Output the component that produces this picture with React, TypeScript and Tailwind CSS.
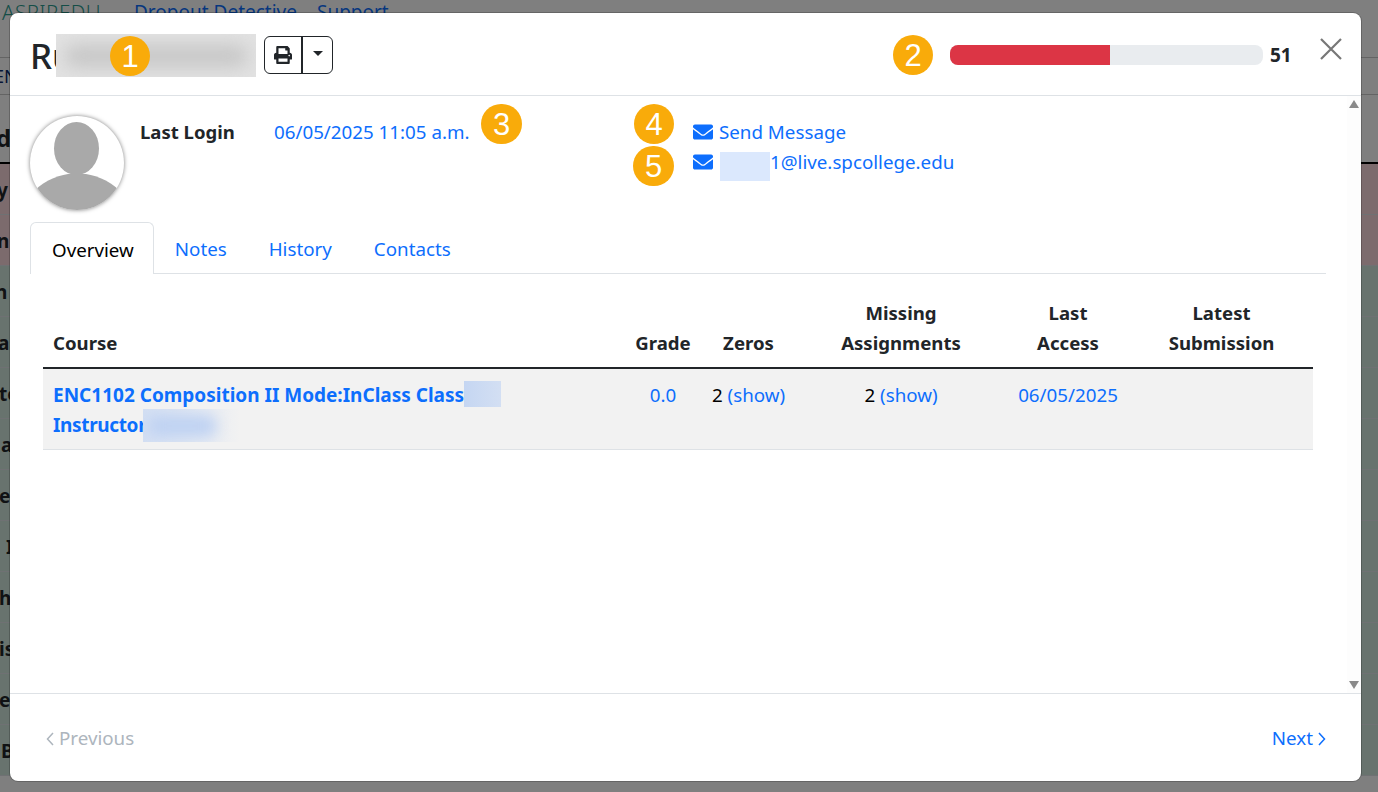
import React from "react";
import { FaPrint, FaEnvelope } from "react-icons/fa";

function Badge({ n, className }: { n: string; className: string }) {
  return (
    <div className={"absolute z-20 flex items-center justify-center rounded-full bg-[#f9ab0a] text-white font-['Liberation_Sans',sans-serif] text-[31px] leading-none " + className}>
      {n}
    </div>
  );
}

function BgRow({ bg, children }: { bg: string; children: React.ReactNode }) {
  return (
    <div className={"h-[51px] shrink-0 border-b border-[#dee2e6] flex items-center pt-[3px] overflow-hidden whitespace-nowrap font-bold text-[19px] text-[#212529] " + bg}>
      {children}
    </div>
  );
}

const redRows = [
  <span className="-ml-[3px]" key="a">y</span>,
  <span className="-ml-[3px]" key="b">n</span>,
];
const greenRows = [
  <span className="-ml-[5px]" key="a">n</span>,
  <span className="-ml-[2px]" key="b">as</span>,
  <span className="-ml-[1px]" key="c">te</span>,
  <span className="ml-[1px]" key="d">a</span>,
  <span className="-ml-[1px]" key="e">es</span>,
  <span className="ml-[6px]" key="f">I</span>,
  <span className="-ml-[1px]" key="g">h</span>,
  <span className="-ml-[1px]" key="h">is</span>,
  <span className="-ml-[1px]" key="i">es</span>,
  <span className="ml-[1px]" key="j">B</span>,
];

function Chevron({ dir }: { dir: "left" | "right" }) {
  return (
    <svg viewBox="0 0 8 14" className="w-[8px] h-[14px]" fill="none" stroke="currentColor" strokeWidth="1.5">
      <path d={dir === "left" ? "M7 1 L1.5 7 L7 13" : "M1 1 L6.5 7 L1 13"} />
    </svg>
  );
}

export default function App() {
  return (
    <div className="relative h-[792px] w-[1378px] overflow-hidden bg-white font-['Noto_Sans',sans-serif] text-[#212529]">
      {/* page behind the dialog */}
      <div className="flex flex-col h-full">
        <div className="h-[58px] shrink-0 border-b border-[#c8c8c8] flex items-start pl-[2px] text-[19px] leading-[25px] overflow-hidden">
          <span className="w-[132px] text-[#2b9c8f] tracking-[0.5px] font-light text-[20.5px]">ASPIREDU</span>
          <span className="text-[#0d6efd]">Dropout Detective</span>
          <span className="text-[#0d6efd] ml-[20px]">Support</span>
        </div>
        <div className="h-[37px] shrink-0 border-b border-[#c8c8c8] flex items-center text-[18px] text-[#0b2a6b] -ml-[6px] overflow-hidden">EN</div>
        <div className="h-[69px] shrink-0 border-b-2 border-black flex items-end pb-[9px] text-[24px] font-bold leading-[30px] -ml-[4px]">d</div>
        <div className="flex flex-col">
          {redRows.map((r, i) => (
            <BgRow bg="bg-[#f8d7da]" key={i}>{r}</BgRow>
          ))}
        </div>
        <div className="flex flex-col">
          {greenRows.map((r, i) => (
            <BgRow bg="bg-[#d1e7dd]" key={i}>{r}</BgRow>
          ))}
        </div>
      </div>
      <div className="absolute inset-0 bg-black/50" />

      {/* dialog */}
      <div className="absolute left-[10px] top-[13px] w-[1351px] h-[768px] z-10 flex flex-col bg-white rounded-[8px] ring-1 ring-black/20 overflow-hidden">
        <div className="h-[83px] shrink-0 border-b border-[#dee2e6] flex items-start">
          <div className="flex items-center pl-[20px] mt-[21px]">
            <span className="w-[26px] text-[35px] leading-[43px] font-medium text-[#212529] overflow-hidden">Ru</span>
            <div className="w-[200px] h-[43px] overflow-hidden bg-[#e2e2e2] flex items-center px-[8px]">
              <div className="h-[22px] w-full rounded-full bg-[#c6c6c6] blur-[9px]" />
            </div>
            <div className="ml-[8px] -mt-[2px] flex h-[38px] w-[69px] rounded-[6px] border border-[#212529] overflow-hidden">
              <div className="w-[38px] flex items-center justify-center border-r-2 border-[#212529]">
                <FaPrint className="text-[18px] text-[#212529]" />
              </div>
              <div className="flex-1 flex items-center justify-center">
                <div className="w-0 h-0 border-x-[5px] border-x-transparent border-t-[5px] border-t-[#212529] -mt-[2px]" />
              </div>
            </div>
          </div>
          <div className="ml-auto flex items-center mt-[32px] mr-[19px]">
            <div className="w-[313px] h-[20px] rounded-[8px] bg-[#e9ecef] overflow-hidden">
              <div className="h-full w-[160px] bg-[#dc3545]" />
            </div>
            <span className="w-[57px] pl-[7px] text-[19px] leading-[20px] font-bold text-[#212529]">51</span>
            <svg viewBox="0 0 22 22" className="w-[22px] h-[22px] -mt-[13px]" fill="none" stroke="#777777" strokeWidth="2.2">
              <path d="M1 1 L21 21 M21 1 L1 21" />
            </svg>
          </div>
        </div>

        <div className="flex-1 flex min-h-0">
          <div className="flex-1 min-w-0 pl-[20px] pr-[21px]">
            <div className="flex items-start pt-[20px] h-[126px]">
              <div className="w-[94px] h-[94px] rounded-full bg-white shadow-[0_0_4px_rgba(0,0,0,0.5)] overflow-hidden shrink-0">
                <svg viewBox="0 0 94 94" className="w-full h-full">
                  <ellipse cx="46.5" cy="32.5" rx="22.5" ry="26.5" fill="#a9a9a9" />
                  <path d="M0 80 C 10 66 26 60 38 58 L56 58 C 68 60 84 66 94 80 V94 H0 Z" fill="#a9a9a9" />
                </svg>
              </div>
              <div className="ml-[16px] mt-[1px] w-[134px] text-[18.5px] leading-[30px] font-bold">Last Login</div>
              <a className="mt-[1px] w-[419px] text-[18.75px] leading-[30px] text-[#0d6efd]">06/05/2025 11:05 a.m.</a>
              <div className="mt-[1px] flex flex-col text-[18.75px] leading-[30px] text-[#0d6efd]">
                <div className="flex items-center">
                  <FaEnvelope className="text-[20px] mr-[6px]" />
                  <span>Send Message</span>
                </div>
                <div className="flex items-center">
                  <FaEnvelope className="text-[20px] mr-[7px]" />
                  <div className="w-[50px] h-[29px] bg-[#dbe8fd] mt-[4px] -mb-[4px]" />
                  <span>1@live.spcollege.edu</span>
                </div>
              </div>
            </div>

            <div className="flex items-end h-[52px] border-b border-[#dee2e6] text-[18.75px] leading-[27px]">
              <div className="h-[52px] pl-[21px] pr-[19px] pt-[1px] flex items-center border border-b-0 border-[#dee2e6] rounded-t-[6px] bg-white text-[#000000] -mb-px">Overview</div>
              <div className="h-[52px] px-[21px] pt-[2px] flex items-center text-[#0d6efd]">Notes</div>
              <div className="h-[52px] px-[21px] pt-[2px] flex items-center text-[#0d6efd]">History</div>
              <div className="h-[52px] px-[21px] pt-[2px] flex items-center text-[#0d6efd]">Contacts</div>
            </div>

            <div className="mx-[13px] mt-[24px]">
              <table className="w-[1270px] table-fixed border-collapse text-[18.75px] leading-[30px]">
                <colgroup>
                  <col className="w-[582px]" />
                  <col className="w-[76px]" />
                  <col className="w-[95px]" />
                  <col className="w-[210px]" />
                  <col className="w-[124px]" />
                  <col className="w-[183px]" />
                </colgroup>
                <thead className="text-[18.6px]">
                  <tr className="border-b-2 border-[#212529] align-bottom">
                    <th className="pl-[10px] pb-[9px] text-left font-bold">Course</th>
                    <th className="pb-[9px] text-center font-bold">Grade</th>
                    <th className="pb-[9px] text-center font-bold">Zeros</th>
                    <th className="pb-[9px] text-center font-bold">Missing<br />Assignments</th>
                    <th className="pb-[9px] text-center font-bold">Last<br />Access</th>
                    <th className="pb-[9px] text-center font-bold">Latest<br />Submission</th>
                  </tr>
                </thead>
                <tbody>
                  <tr className="bg-[#f2f2f2] border-b border-[#dee2e6] align-top">
                    <td className="pl-[10px] pt-[11px] pb-[9px]">
                      <div className="flex h-[30px] font-bold text-[19px] text-[#0d6efd] whitespace-nowrap">
                        <span>ENC1102 Composition II Mode:InClass Class</span>
                        <div className="w-[37px] h-[26px] mt-[1px] bg-linear-to-r from-[#c5d6f2] to-[#d3dff3]" />
                      </div>
                      <div className="flex h-[30px] font-bold text-[19px] text-[#0d6efd] items-start whitespace-nowrap">
                        <span className="tracking-[-0.35px]">Instructor</span>
                        <div className="w-[97px] h-[33px] -mt-[1px] shrink-0 overflow-hidden flex items-center -ml-[3px] bg-linear-to-r from-[#d3dff3] to-[#f2f2f2]">
                          <div className="h-[22px] w-[70px] ml-[4px] rounded-full bg-[#bfd2f2] blur-[7px]" />
                        </div>
                      </div>
                    </td>
                    <td className="pt-[11px] text-center text-[#0d6efd]">0.0</td>
                    <td className="pt-[11px] text-center whitespace-nowrap text-[#000000]">2 <span className="text-[#0d6efd]">(show)</span></td>
                    <td className="pt-[11px] text-center whitespace-nowrap text-[#000000]">2 <span className="text-[#0d6efd]">(show)</span></td>
                    <td className="pt-[11px] text-center text-[#0d6efd]">06/05/2025</td>
                    <td />
                  </tr>
                </tbody>
              </table>
            </div>
          </div>
          <div className="w-[14px] shrink-0 bg-[#fdfdfd] flex flex-col items-center justify-between py-[4px]">
            <div className="w-0 h-0 border-x-[5px] border-x-transparent border-b-[8px] border-b-[#8a8a8a]" />
            <div className="w-0 h-0 border-x-[5px] border-x-transparent border-t-[8px] border-t-[#8a8a8a]" />
          </div>
        </div>

        <div className="h-[88px] shrink-0 border-t border-[#dee2e6] flex items-center justify-between pl-[36px] pr-[35px] text-[18.75px] pt-[2px]">
          <div className="flex items-center gap-[5px] text-[#adb5bd]">
            <Chevron dir="left" />
            <span>Previous</span>
          </div>
          <div className="flex items-center gap-[5px] text-[#0d6efd]">
            <span>Next</span>
            <Chevron dir="right" />
          </div>
        </div>
      </div>

      <Badge n="1" className="left-[110px] top-[36px] w-[40px] h-[40px]" />
      <Badge n="2" className="left-[893px] top-[35px] w-[40px] h-[40px]" />
      <Badge n="3" className="left-[481px] top-[104px] w-[41px] h-[40px]" />
      <Badge n="4" className="left-[634px] top-[104px] w-[40px] h-[40px]" />
      <Badge n="5" className="left-[633px] top-[146px] w-[41px] h-[40px]" />
    </div>
  );
}
